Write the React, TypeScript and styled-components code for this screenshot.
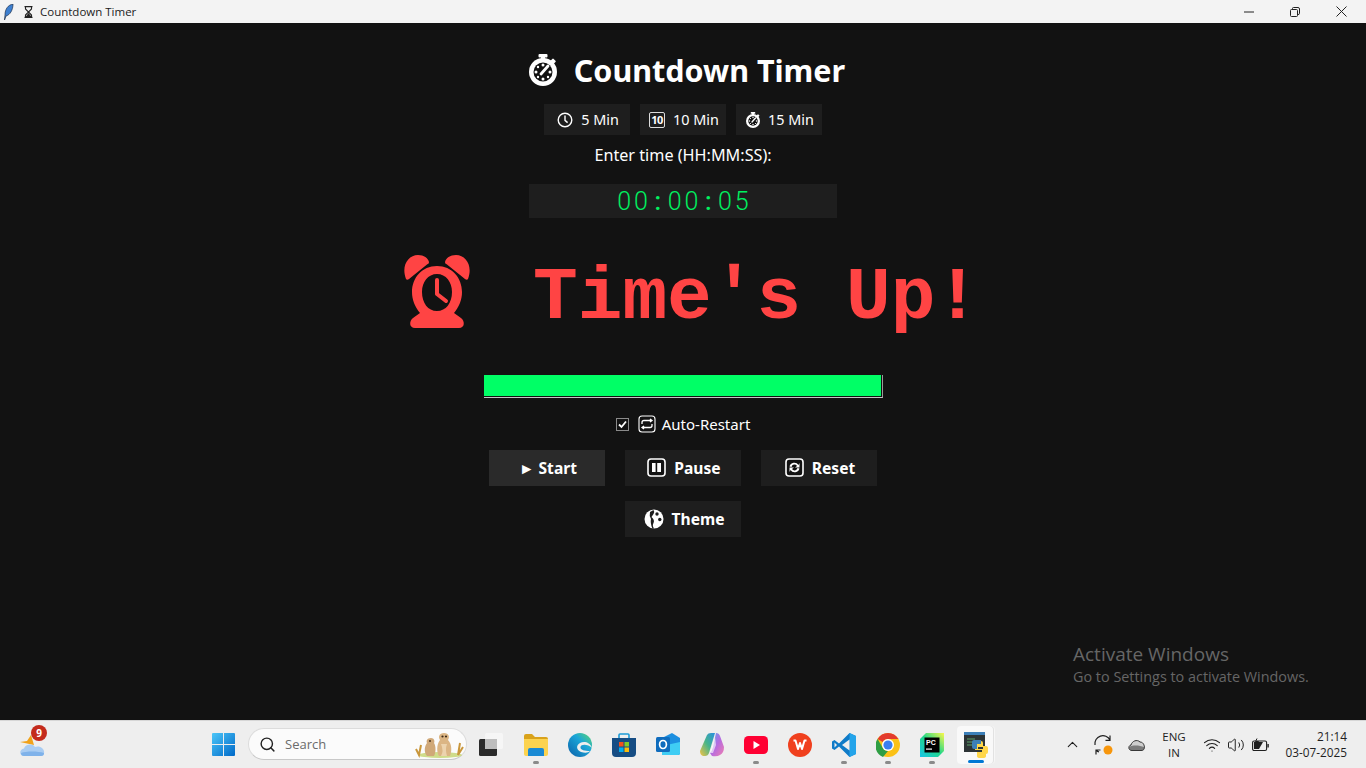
import React from 'react'
import styled, { createGlobalStyle } from 'styled-components'
import { ChevronUp, Search as SearchIcon, Wifi, Volume2 } from 'lucide-react'

const GlobalStyle = createGlobalStyle`
  html, body {
    margin: 0;
    height: 100%;
    overflow: hidden;
    background: #121212;
    font-family: "Noto Sans", "Open Sans", sans-serif;
  }
`

const Base = styled.div`
  display: flex;
  flex-direction: column;
  width: 1366px;
  height: 768px;
`

/* window chrome */
const TitleBar = styled.header`
  display: flex;
  align-items: center;
  flex: 0 0 23px;
  padding-right: 2px;
  background: #f3f3f3;
  color: #1c1c1c;
  font-size: 12px;
`

const TitleIcon = styled.span`
  display: flex;
  align-items: center;
  justify-content: center;
  width: ${(p: { $w: number }) => p.$w}px;
  height: 23px;
`

const TitleText = styled.span`
  flex: 1;
  margin-left: 1px;
  font-family: "Open Sans", sans-serif;
  font-size: 11.5px;
`

const WinButton = styled.span`
  display: flex;
  align-items: center;
  justify-content: center;
  width: 46px;
  height: 23px;
`

/* timer body */
const Main = styled.main`
  position: relative;
  flex: 1;
  display: flex;
  flex-direction: column;
  align-items: center;
  background: #121212;
  color: #fff;
`

const Heading = styled.h1`
  display: flex;
  align-items: center;
  gap: 17px;
  box-sizing: border-box;
  height: 48px;
  margin: 24px 0 0 8px;
  padding-bottom: 2px;
  font-size: 30.5px;
  font-weight: 700;
`

const Presets = styled.div`
  display: flex;
  gap: 10px;
  margin-top: 9px;
`

const PresetButton = styled.button`
  display: flex;
  align-items: center;
  justify-content: center;
  gap: 8px;
  box-sizing: border-box;
  width: 86px;
  height: 31px;
  padding: 0 0 0 2px;
  border: 0;
  background: #1e1e1e;
  color: #fff;
  font-family: inherit;
  font-size: 14.4px;
`

const Prompt = styled.label`
  height: 20px;
  margin-top: 10px;
  font-size: 16.2px;
  line-height: 20px;
`

const TimeInput = styled.div`
  display: flex;
  align-items: center;
  justify-content: center;
  width: 308px;
  height: 34px;
  margin-top: 19px;
  background: #1e1e1e;
  color: #00f060;
  font-family: Roboto, sans-serif;
  font-size: 25px;
  font-weight: 300;
`

const TimeCell = styled.span<{ $colon: boolean }>`
  width: 16.8px;
  font-weight: ${p => (p.$colon ? 500 : 300)};
  text-align: center;
`

const Alert = styled.div`
  display: flex;
  align-items: center;
  gap: 62px;
  width: 577px;
  height: 80px;
  margin: 40px 0 0 17px;
  color: #ff4444;
  font-family: "Liberation Mono", monospace;
  font-size: 74.5px;
  font-weight: 700;
  white-space: nowrap;
`

const AlarmWrap = styled.span`
  display: flex;
  flex: 0 0 68px;
  margin-bottom: 13px;
`

const Track = styled.div`
  box-sizing: border-box;
  width: 399px;
  height: 23px;
  margin-top: 37px;
  background: #1e1e1e;
  border-right: 1px solid #9a9a9a;
  border-bottom: 1px solid #c4c4c4;
`

const Fill = styled.div`
  height: 100%;
  background: #00ff66;
  border-right: 1px solid #121212;
  border-bottom: 1px solid #121212;
  box-sizing: border-box;
`

const CheckRow = styled.div`
  display: flex;
  align-items: center;
  height: 20px;
  margin-top: 16px;
  font-size: 15px;
`

const CheckBox = styled.span`
  display: flex;
  align-items: center;
  justify-content: center;
  box-sizing: border-box;
  width: 13px;
  height: 13px;
  margin-right: 9px;
  border: 1px solid #8a8a8a;
`

const CheckLabel = styled.span`
  margin-left: 6px;
`

const Actions = styled.div`
  display: flex;
  justify-content: center;
  gap: 20px;
  margin-top: ${(p: { $top: number }) => p.$top}px;
`

const ActionButton = styled.button<{ $hover?: boolean }>`
  display: flex;
  align-items: center;
  justify-content: center;
  gap: 8px;
  box-sizing: border-box;
  width: 116px;
  height: 36px;
  padding: 0 0 1px 2px;
  border: 0;
  background: ${p => (p.$hover ? '#2a2a2a' : '#1e1e1e')};
  color: #fff;
  font-family: inherit;
  font-size: 15.6px;
  font-weight: 700;
`

const Watermark = styled.div`
  position: absolute;
  left: 1073px;
  top: 618px;
  color: #666;
  font-family: "Open Sans", sans-serif;
  font-size: 14.4px;
  line-height: 20px;
`

const WatermarkTitle = styled.div`
  font-size: 19px;
  line-height: 26px;
`

const TenKey = styled.span`
  display: flex;
  align-items: center;
  justify-content: center;
  box-sizing: border-box;
  width: 16px;
  height: 16px;
  border: 1px solid #ddd;
  border-radius: 2px;
  font-size: 11px;
  font-weight: 700;
  letter-spacing: -0.5px;
`

/* taskbar */
const Taskbar = styled.footer`
  display: flex;
  align-items: center;
  box-sizing: border-box;
  flex: 0 0 48px;
  padding-left: 20px;
  background: #eeeeee;
  border-top: 1px solid #d6d6d6;
`

const Weather = styled.div`
  position: relative;
  display: flex;
  width: 180px;
`

const Badge = styled.span`
  position: absolute;
  left: 11px;
  top: -8px;
  width: 16px;
  height: 16px;
  border-radius: 50%;
  background: #c42b1c;
  color: #fff;
  font-size: 10px;
  font-weight: 700;
  line-height: 16px;
  text-align: center;
`

const Slot = styled.div<{ $w?: number }>`
  position: relative;
  display: flex;
  align-items: center;
  justify-content: center;
  flex: 0 0 ${p => p.$w ?? 44}px;
  height: 38px;
  border-radius: 4px;
`

const ActiveTile = styled.span`
  position: absolute;
  left: 3px;
  top: 0;
  width: 36px;
  height: 38px;
  border-radius: 4px;
  background: #f9f9f9;
  box-shadow: 1px 0 0 #e2e2e2, 2px 0 0 #f7f7f7;
`

const RunDot = styled.span<{ $active?: boolean }>`
  position: absolute;
  left: 50%;
  bottom: ${p => (p.$active ? 1 : 0)}px;
  width: ${p => (p.$active ? 16 : 6)}px;
  height: 3px;
  border-radius: 2px;
  background: ${p => (p.$active ? '#0078d4' : '#8a8a8a')};
  transform: translateX(-50%);
`

const SearchBox = styled.div`
  display: flex;
  align-items: center;
  box-sizing: border-box;
  flex: 0 0 219px;
  height: 32px;
  margin: -1px 0 0 2px;
  padding: 0 2px 0 10px;
  border: 1px solid #dcdcdc;
  border-bottom-color: #c8c8c8;
  border-radius: 16px;
  background: #fbfbfb;
  color: #6b6b6b;
  font-family: "Open Sans", sans-serif;
  font-size: 13px;
`

const SearchLabel = styled.span`
  flex: 1;
  margin-left: 9px;
`

const Tray = styled.div`
  display: flex;
  align-items: center;
  margin-left: auto;
  color: #1f1f1f;
`

const TrayItem = styled.span`
  display: flex;
  align-items: center;
  justify-content: center;
  width: ${(p: { $w: number }) => p.$w}px;
`

const Lang = styled.div`
  width: 44px;
  margin-right: 4px;
  font-family: "Open Sans", sans-serif;
  font-size: 11.5px;
  line-height: 16px;
  text-align: center;
`

const Clock = styled.div`
  box-sizing: border-box;
  width: 94px;
  margin-top: -2px;
  padding-right: 19px;
  font-family: "Open Sans", sans-serif;
  font-size: 11.8px;
  line-height: 16px;
  text-align: right;
`

const IconWrap = styled.span`
  position: relative;
  display: flex;
`

/* drawings */
const Stopwatch = ({ size }: { size: number }) => (
  <svg width={size} height={size * 32 / 28} viewBox="0 0 28 32">
    <rect x="9.500" y="0" width="9" height="3.500" rx="1" fill="#fff" />
    <rect x="12" y="2" width="4" height="4" fill="#fff" />
    <rect x="22" y="5" width="4.500" height="4.500" rx="1" fill="#fff" transform="rotate(45 24 7)" />
    <circle cx="14" cy="18" r="14" fill="#fff" />
    <circle cx="14" cy="18" r="9.500" fill="#121212" />
    <g fill="#fff">
      <circle cx="14" cy="11" r="1.500" />
      <circle cx="7" cy="18" r="1.500" />
      <circle cx="21" cy="18" r="1.500" />
      <circle cx="14" cy="25" r="1.500" />
      <circle cx="9" cy="13" r="1.200" />
      <circle cx="9" cy="23" r="1.200" />
      <circle cx="19" cy="23" r="1.200" />
    </g>
    <path d="M12 20 L19 12" stroke="#fff" strokeWidth="2.800" strokeLinecap="round" />
  </svg>
)

const SmallClock = () => (
  <svg width="16" height="16" viewBox="0 0 16 16" fill="none" stroke="#fff" strokeWidth="1.400">
    <circle cx="8" cy="8" r="6.800" />
    <path d="M8 3.600 V8.400 L10.600 10.600" />
  </svg>
)

const BoxIcon = ({ children }: { children: React.ReactNode }) => (
  <svg width="19" height="19" viewBox="0 0 19 19">
    <rect x="1" y="1" width="17" height="17" rx="3" fill="#121212" stroke="#fff" strokeWidth="1.600" />
    {children}
  </svg>
)

const PauseGlyph = () => (
  <BoxIcon>
    <rect x="5" y="5" width="9" height="9" fill="#fff" />
    <rect x="8.600" y="5" width="1.600" height="9" fill="#121212" />
  </BoxIcon>
)

const ResetGlyph = () => (
  <BoxIcon>
    <path d="M4.500 8.500 A5 5 0 0 1 13.500 7 L14.500 5 V9.500 H10 L12 8 A3 3 0 0 0 6.500 9 Z" fill="#fff" />
    <path d="M14.500 10.500 A5 5 0 0 1 5.500 12 L4.500 14 V9.500 H9 L7 11 A3 3 0 0 0 12.500 10 Z" fill="#fff" />
  </BoxIcon>
)

const RepeatGlyph = () => (
  <svg width="18" height="18" viewBox="0 0 18 18" fill="none" stroke="#fff">
    <rect x="1" y="1" width="16" height="16" rx="3" strokeWidth="1.100" />
    <path d="M4 9 V7.500 Q4 5.500 6 5.500 H13.500 M12 4 L14 5.500 L12 7" strokeWidth="1.300" />
    <path d="M14 9 V10.500 Q14 12.500 12 12.500 H4.500 M6 11 L4 12.500 L6 14" strokeWidth="1.300" />
  </svg>
)

const PaletteGlyph = () => (
  <svg width="20" height="20" viewBox="0 0 20 20">
    <circle cx="10" cy="10" r="9.500" fill="#fff" />
    <circle cx="13" cy="5" r="1.700" fill="#1e1e1e" />
    <circle cx="15.800" cy="10.500" r="1.700" fill="#1e1e1e" />
    <path d="M9.500 1 Q11 3 9.500 5 L7.500 8 Q11 11 9.500 14 Q8 16.500 10 19.500 L8.400 19.500 Q6 14 7 10 Q5 7 6 3 Z" fill="#1e1e1e" />
  </svg>
)

const AlarmClock = () => (
  <svg width="68" height="73" viewBox="0 0 68 73">
    <path fill="#ff4444" d="M3 24 C-2 11 5 0 15 0 C21 0 25 3 26 7 C26 8.500 25 9 24 9.500 L6 24 C5 25 3.500 25 3 24 Z" />
    <path fill="#ff4444" d="M65 24 C70 11 63 0 53 0 C47 0 43 3 42 7 C42 8.500 43 9 44 9.500 L62 24 C63 25 64.500 25 65 24 Z" />
    <path fill="#ff4444" fillRule="evenodd" d="M34 11 C49 11 59 23 59 37 C59 45 56 52 51 58 L58 63 C62 66 62 73 56 73 H12 C6 73 6 66 10 63 L17 58 C12 52 9 45 9 37 C9 23 19 11 34 11 Z M34 19 C25 19 19 27 19 37 C19 48 25 56 34 56 C43 56 49 48 49 37 C49 27 43 19 34 19 Z" />
    <path d="M34 25 V39 L43 46" fill="none" stroke="#ff4444" strokeWidth="4" strokeLinecap="round" strokeLinejoin="round" />
  </svg>
)

const Feather = () => (
  <svg width="10" height="16" viewBox="0 0 10 16">
    <path d="M9 0 C4 1 1 5 1 11 L0.500 16 L2 12 C6 11 9 6 9 0 Z" fill="#3d7fd0" stroke="#20324e" strokeWidth="0.700" />
  </svg>
)

const Hourglass = () => (
  <svg width="9" height="12" viewBox="0 0 9 12" fill="none" stroke="#222" strokeWidth="1.100">
    <path d="M0.500 0.600 H8.500 M0.500 11.400 H8.500 M1.500 1 V3 L4.500 6 L1.500 9 V11 M7.500 1 V3 L4.500 6 L7.500 9 V11" />
    <path d="M2.500 10.500 L4.500 8 L6.500 10.500 Z" fill="#222" />
  </svg>
)

const WeatherIcon = () => (
  <svg width="25" height="24" viewBox="0 0 25 24">
    <path d="M0 9 L7 8 L11 2 L14 12 Z" fill="#f1a21a" />
    <path d="M4 23 C-1 23 -1 16 4 15.500 C5 11 13 10 15 14 C20 12 25 16 24 20 C24 22 23 23 21 23 Z" fill="#a9ccf2" />
    <path d="M1 20 C6 18 18 18 24 20 C24 22 23 23 21 23 H4 C2 23 1 22 1 20 Z" fill="#7fb2ea" />
  </svg>
)

const StartLogo = () => (
  <svg width="23" height="23" viewBox="0 0 23 23">
    <defs>
      <linearGradient id="win" x1="0" y1="0" x2="1" y2="1">
        <stop offset="0" stopColor="#4cc6f8" />
        <stop offset="1" stopColor="#0069c8" />
      </linearGradient>
    </defs>
    <path fill="url(#win)" d="M0 1 Q0 0 1 0 H11 V11 H0 Z M12 0 H22 Q23 0 23 1 V11 H12 Z M0 12 H11 V23 H1 Q0 23 0 22 Z M12 12 H23 V22 Q23 23 22 23 H12 Z" />
  </svg>
)

const Meerkats = () => (
  <svg width="50" height="27" viewBox="0 0 50 27">
    <ellipse cx="26" cy="24" rx="22" ry="3" fill="#cfdc8a" />
    <path d="M2 18 L5 24 L7 14 M46 12 L44 24 L49 16" stroke="#c9973c" strokeWidth="2" fill="none" />
    <path d="M17 7 C13 7 12 10 13 12 C10 16 10 22 13 25 H20 C22 21 22 15 20 12 C21 10 20 7 17 7 Z" fill="#d0a878" />
    <path d="M30 2 C25 2 24 6 26 9 C22 14 23 22 25 25 H36 C38 20 38 13 34 9 C36 6 35 2 30 2 Z" fill="#dbb584" />
    <path d="M27 13 Q30 20 27 25 H33 Q31 18 33 13 Z" fill="#ecd3ae" />
    <circle cx="28.500" cy="5.500" r="1.100" fill="#3c2a18" />
    <circle cx="32" cy="5.500" r="1.100" fill="#3c2a18" />
    <circle cx="16" cy="10" r="0.900" fill="#3c2a18" />
  </svg>
)

const TaskView = () => (
  <svg width="24" height="24" viewBox="0 0 24 24">
    <rect x="0" y="6" width="18" height="17" rx="1.500" fill="#2b2b2b" />
    <rect x="6" y="0" width="18" height="16" rx="1.500" fill="#f6f6f6" />
    <rect x="6" y="6" width="12" height="10" fill="#bdbdbd" />
  </svg>
)

const FolderApp = () => (
  <svg width="24" height="22" viewBox="0 0 24 22">
    <path d="M0 2 Q0 0 2 0 H8 L11 3 H22 Q24 3 24 5 V8 H0 Z" fill="#d9a21b" />
    <path d="M0 5 H24 V20 Q24 22 22 22 H2 Q0 22 0 20 Z" fill="#fcd34f" />
    <path d="M4 22 V16 Q4 14 6 14 H18 Q20 14 20 16 V22 Z" fill="#1a8ad4" />
  </svg>
)

const EdgeApp = () => (
  <svg width="24" height="24" viewBox="0 0 24 24">
    <defs>
      <linearGradient id="edge" x1="0" y1="1" x2="1" y2="0">
        <stop offset="0" stopColor="#0c5fa8" />
        <stop offset="0.6" stopColor="#1ba6d8" />
        <stop offset="1" stopColor="#5fd86a" />
      </linearGradient>
    </defs>
    <circle cx="12" cy="12" r="12" fill="url(#edge)" />
    <path d="M24 15 C22 9 16 8 12 10 C8 12 8 17 13 19 C17 20 20 20 22 18 C17 18 12 17 12.500 14 C13 11 20 11 24 15 Z" fill="#eeeeee" />
  </svg>
)

const StoreApp = () => (
  <svg width="24" height="24" viewBox="0 0 24 24">
    <path d="M7 5 V2 Q7 1 8 1 H16 Q17 1 17 2 V5" fill="none" stroke="#1b9ad6" strokeWidth="1.600" />
    <path d="M0 5 H24 V20 Q24 24 20 24 H4 Q0 24 0 20 Z" fill="#164d84" />
    <rect x="7" y="9" width="4.500" height="4.500" fill="#f1511b" />
    <rect x="12.500" y="9" width="4.500" height="4.500" fill="#80cc28" />
    <rect x="7" y="14.500" width="4.500" height="4.500" fill="#00adef" />
    <rect x="12.500" y="14.500" width="4.500" height="4.500" fill="#fbbc09" />
  </svg>
)

const OutlookApp = () => (
  <svg width="24" height="24" viewBox="0 0 24 24">
    <path d="M8 4 L16 0 L24 5 V20 Q24 22 22 22 H6 V6 Z" fill="#1c8fe0" />
    <path d="M6 13 L24 9 V20 Q24 22 22 22 H6 Z" fill="#3fcdf4" />
    <rect x="0" y="4" width="14" height="15" rx="1.500" fill="#0f6cbd" />
    <ellipse cx="7" cy="11.500" rx="3.400" ry="4" fill="none" stroke="#fff" strokeWidth="1.700" />
  </svg>
)

const CopilotApp = () => (
  <svg width="24" height="24" viewBox="0 0 24 24">
    <defs>
      <linearGradient id="copA" x1="0" y1="1" x2="1" y2="0">
        <stop offset="0" stopColor="#f5c243" />
        <stop offset="0.5" stopColor="#46b58a" />
        <stop offset="1" stopColor="#2a8fe0" />
      </linearGradient>
      <linearGradient id="copB" x1="0" y1="0" x2="1" y2="1">
        <stop offset="0" stopColor="#5da7f0" />
        <stop offset="0.5" stopColor="#b56be0" />
        <stop offset="1" stopColor="#f07fb0" />
      </linearGradient>
    </defs>
    <path d="M7 2 Q8 0 11 0 H15 L9 20 Q8 23 5 23 H3 Q0 22 0 18 Z" fill="url(#copA)" />
    <path d="M16 0 Q19 0 20 3 L24 14 Q24 20 20 22 Q17 24 12 23 L10 20 Q12 18 13 14 Z" fill="url(#copB)" />
    <path d="M10 20 L15 4 L16 12 L13 20 Z" fill="#fff" opacity="0.600" />
  </svg>
)

const YoutubeApp = () => (
  <svg width="24" height="18" viewBox="0 0 24 18">
    <rect x="0" y="0" width="24" height="18" rx="4.500" fill="#ff0033" />
    <path d="M9.500 5 L16 9 L9.500 13 Z" fill="#fff" />
  </svg>
)

const WpsApp = () => (
  <svg width="24" height="24" viewBox="0 0 24 24">
    <circle cx="12" cy="12" r="12" fill="#f0401e" />
    <path d="M5.500 7.500 H7.500 L10 16 L12 10 L14 16 L16.500 7.500 H18.500" fill="none" stroke="#fff" strokeWidth="2" strokeLinejoin="round" />
  </svg>
)

const VsCodeApp = () => (
  <svg width="24" height="24" viewBox="0 0 24 24">
    <path d="M17.500 0 L24 3 V21 L17.500 24 L7 13.500 L2.500 17 L0 15.500 V8.500 L2.500 7 L7 10.500 Z" fill="#0f7bc8" />
    <path d="M17.500 0 L24 3 V21 L17.500 24 Z" fill="#24a4ea" />
    <path d="M17.500 6.500 V17.500 L10 12 Z" fill="#eeeeee" />
    <path d="M2.500 9.500 V14.500 L5 12 Z" fill="#eeeeee" />
  </svg>
)

const ChromeApp = () => (
  <svg width="24" height="24" viewBox="0 0 24 24">
    <circle cx="12" cy="12" r="12" fill="#fbc116" />
    <path d="M12 0 A12 12 0 0 1 22.400 6 H12 A6 6 0 0 0 6.800 9 L1.600 6 A12 12 0 0 1 12 0 Z" fill="#e33b2e" />
    <path d="M1.600 6 L6.800 15 A6 6 0 0 0 12 18 L7 24 A12 12 0 0 1 1.600 6 Z" fill="#2f9e44" />
    <circle cx="12" cy="12" r="6" fill="#fff" />
    <circle cx="12" cy="12" r="4.600" fill="#3a7ff0" />
  </svg>
)

const PyCharmApp = () => (
  <svg width="24" height="24" viewBox="0 0 24 24">
    <defs>
      <linearGradient id="pyc" x1="0" y1="1" x2="1" y2="0">
        <stop offset="0" stopColor="#17c4e8" />
        <stop offset="0.5" stopColor="#21d789" />
        <stop offset="1" stopColor="#fcf84a" />
      </linearGradient>
    </defs>
    <path d="M0 6 L6 0 H24 V18 L18 24 H0 Z" fill="url(#pyc)" />
    <rect x="4.500" y="4.500" width="15" height="15" fill="#000" />
    <text x="6" y="12" fill="#fff" fontSize="7" fontWeight="700" fontFamily="Liberation Sans">PC</text>
    <rect x="6" y="15.500" width="6" height="1.200" fill="#fff" />
  </svg>
)

const IdleApp = () => (
  <svg width="24" height="26" viewBox="0 0 24 26">
    <rect x="0" y="0" width="21" height="20" fill="#2d3436" />
    <rect x="0" y="0" width="21" height="3" fill="#3c7fb8" />
    <path d="M3 7 H11 M3 10 H9 M3 13 H12" stroke="#5fa26a" strokeWidth="1.200" />
    <path d="M11 9 H17 Q19 9 19 11 V15 H14 V17 H19 V14 H22 Q24 14 24 16 V20 Q24 22 22 22 V24 Q22 26 19 26 H16 Q13 26 13 24 V20 H18 V18 H11 Z" fill="#ffd64a" />
    <path d="M10 8 H17 V12 H13 V17 H10 Q8 17 8 15 V10 Q8 8 10 8 Z" fill="#3c7fb8" />
  </svg>
)

const SyncIcon = () => (
  <svg width="22" height="22" viewBox="0 0 22 22" fill="none" stroke="#1f1f1f" strokeWidth="1.200">
    <path d="M2 11 A8 8 0 0 1 17 6 M17 1.500 V6.300 H12.500" />
    <path d="M6 18 A8 8 0 0 1 3.500 16.500 M3 20.500 V16 H7.500" />
    <circle cx="15" cy="16" r="4.500" fill="#f7960c" stroke="none" />
  </svg>
)

const CloudIcon = () => (
  <svg width="17" height="12" viewBox="0 0 17 12">
    <path d="M4 11.500 C0 11.500 0 6.500 3 6 C4 2 9 0 12 3 C16 3 17 8 16 10 C15.500 11 15 11.500 13 11.500 Z" fill="#cfcfcf" stroke="#333" strokeWidth="1" />
    <path d="M1 8 C5 6 11 6 16.500 8.500 C16 10.500 15 11.500 13 11.500 H4 C2 11.500 1 10 1 8 Z" fill="#444" opacity="0.600" />
  </svg>
)

const BatteryIcon = () => (
  <svg width="17" height="14" viewBox="0 0 17 14" fill="none" stroke="#1f1f1f" strokeWidth="1.100">
    <rect x="0.600" y="3" width="14" height="9.500" rx="1.500" />
    <path d="M2 4 H11 L7 11 H2 Z" fill="#1f1f1f" stroke="none" />
    <path d="M5 0.500 L3.500 3.500 H6.500 L5 6.500" strokeWidth="1" />
    <rect x="15.400" y="6" width="1.400" height="3.500" fill="#1f1f1f" stroke="none" />
  </svg>
)

const apps: { icon: React.ReactNode; running?: boolean }[] = [
  { icon: <FolderApp />, running: true },
  { icon: <EdgeApp /> },
  { icon: <StoreApp /> },
  { icon: <OutlookApp /> },
  { icon: <CopilotApp /> },
  { icon: <YoutubeApp />, running: true },
  { icon: <WpsApp /> },
  { icon: <VsCodeApp />, running: true },
  { icon: <ChromeApp />, running: true },
  { icon: <PyCharmApp />, running: true },
]

const time = '00:00:05'

function App() {
  return (
    <Base>
      <GlobalStyle />
      <TitleBar>
        <TitleIcon $w={18}><Feather /></TitleIcon>
        <TitleIcon $w={21}><Hourglass /></TitleIcon>
        <TitleText>Countdown Timer</TitleText>
        <WinButton>
          <svg width="10" height="10" viewBox="0 0 10 10"><path d="M0 5 H10" stroke="#222" /></svg>
        </WinButton>
        <WinButton>
          <svg width="10" height="10" viewBox="0 0 10 10" fill="none" stroke="#222">
            <rect x="0.500" y="2.500" width="7" height="7" rx="1" />
            <path d="M2.500 2.500 V1.500 Q2.500 0.500 3.500 0.500 H8 Q9.500 0.500 9.500 2 V6.500 Q9.500 7.500 8 7.500" />
          </svg>
        </WinButton>
        <WinButton>
          <svg width="11" height="11" viewBox="0 0 11 11"><path d="M0.500 0.500 L10.500 10.500 M10.500 0.500 L0.500 10.500" stroke="#222" /></svg>
        </WinButton>
      </TitleBar>

      <Main>
        <Heading>
          <Stopwatch size={28} />
          Countdown Timer
        </Heading>

        <Presets>
          <PresetButton><SmallClock /> 5 Min</PresetButton>
          <PresetButton><TenKey>10</TenKey> 10 Min</PresetButton>
          <PresetButton><Stopwatch size={14} /> 15 Min</PresetButton>
        </Presets>

        <Prompt>Enter time (HH:MM:SS):</Prompt>
        <TimeInput>
          {time.split('').map((c, i) => (
            <TimeCell key={i} $colon={c === ':'}>{c}</TimeCell>
          ))}
        </TimeInput>

        <Alert>
          <AlarmWrap><AlarmClock /></AlarmWrap>
          <span>Time's Up!</span>
        </Alert>

        <Track><Fill /></Track>

        <CheckRow>
          <CheckBox>
            <svg width="9" height="9" viewBox="0 0 9 9"><path d="M1 4.500 L3.500 7 L8 1.500" fill="none" stroke="#fff" strokeWidth="1.800" /></svg>
          </CheckBox>
          <RepeatGlyph />
          <CheckLabel>Auto-Restart</CheckLabel>
        </CheckRow>

        <Actions $top={16}>
          <ActionButton $hover>► Start</ActionButton>
          <ActionButton><PauseGlyph /> Pause</ActionButton>
          <ActionButton><ResetGlyph /> Reset</ActionButton>
        </Actions>
        <Actions $top={15}>
          <ActionButton><PaletteGlyph /> Theme</ActionButton>
        </Actions>

        <Watermark>
          <WatermarkTitle>Activate Windows</WatermarkTitle>
          Go to Settings to activate Windows.
        </Watermark>
      </Main>

      <Taskbar>
        <Weather>
          <WeatherIcon />
          <Badge>9</Badge>
        </Weather>
        <Slot $w={46}><StartLogo /></Slot>
        <SearchBox>
          <SearchIcon size={17} color="#222" strokeWidth={2} />
          <SearchLabel>Search</SearchLabel>
          <Meerkats />
        </SearchBox>
        <Slot $w={47}><TaskView /></Slot>
        {apps.map((app, i) => (
          <Slot key={i}>
            {app.icon}
            {app.running && <RunDot />}
          </Slot>
        ))}
        <Slot>
          <ActiveTile />
          <IconWrap><IdleApp /></IconWrap>
          <RunDot $active />
        </Slot>
        <Tray>
          <TrayItem $w={32}><ChevronUp size={17} strokeWidth={1.5} /></TrayItem>
          <TrayItem $w={32}><SyncIcon /></TrayItem>
          <TrayItem $w={32}><CloudIcon /></TrayItem>
          <Lang>ENG<br />IN</Lang>
          <TrayItem $w={24}><Wifi size={18} strokeWidth={1.5} /></TrayItem>
          <TrayItem $w={24}><Volume2 size={18} strokeWidth={1.3} /></TrayItem>
          <TrayItem $w={24}><BatteryIcon /></TrayItem>
          <Clock>21:14<br />03-07-2025</Clock>
        </Tray>
      </Taskbar>
    </Base>
  )
}

export default App
